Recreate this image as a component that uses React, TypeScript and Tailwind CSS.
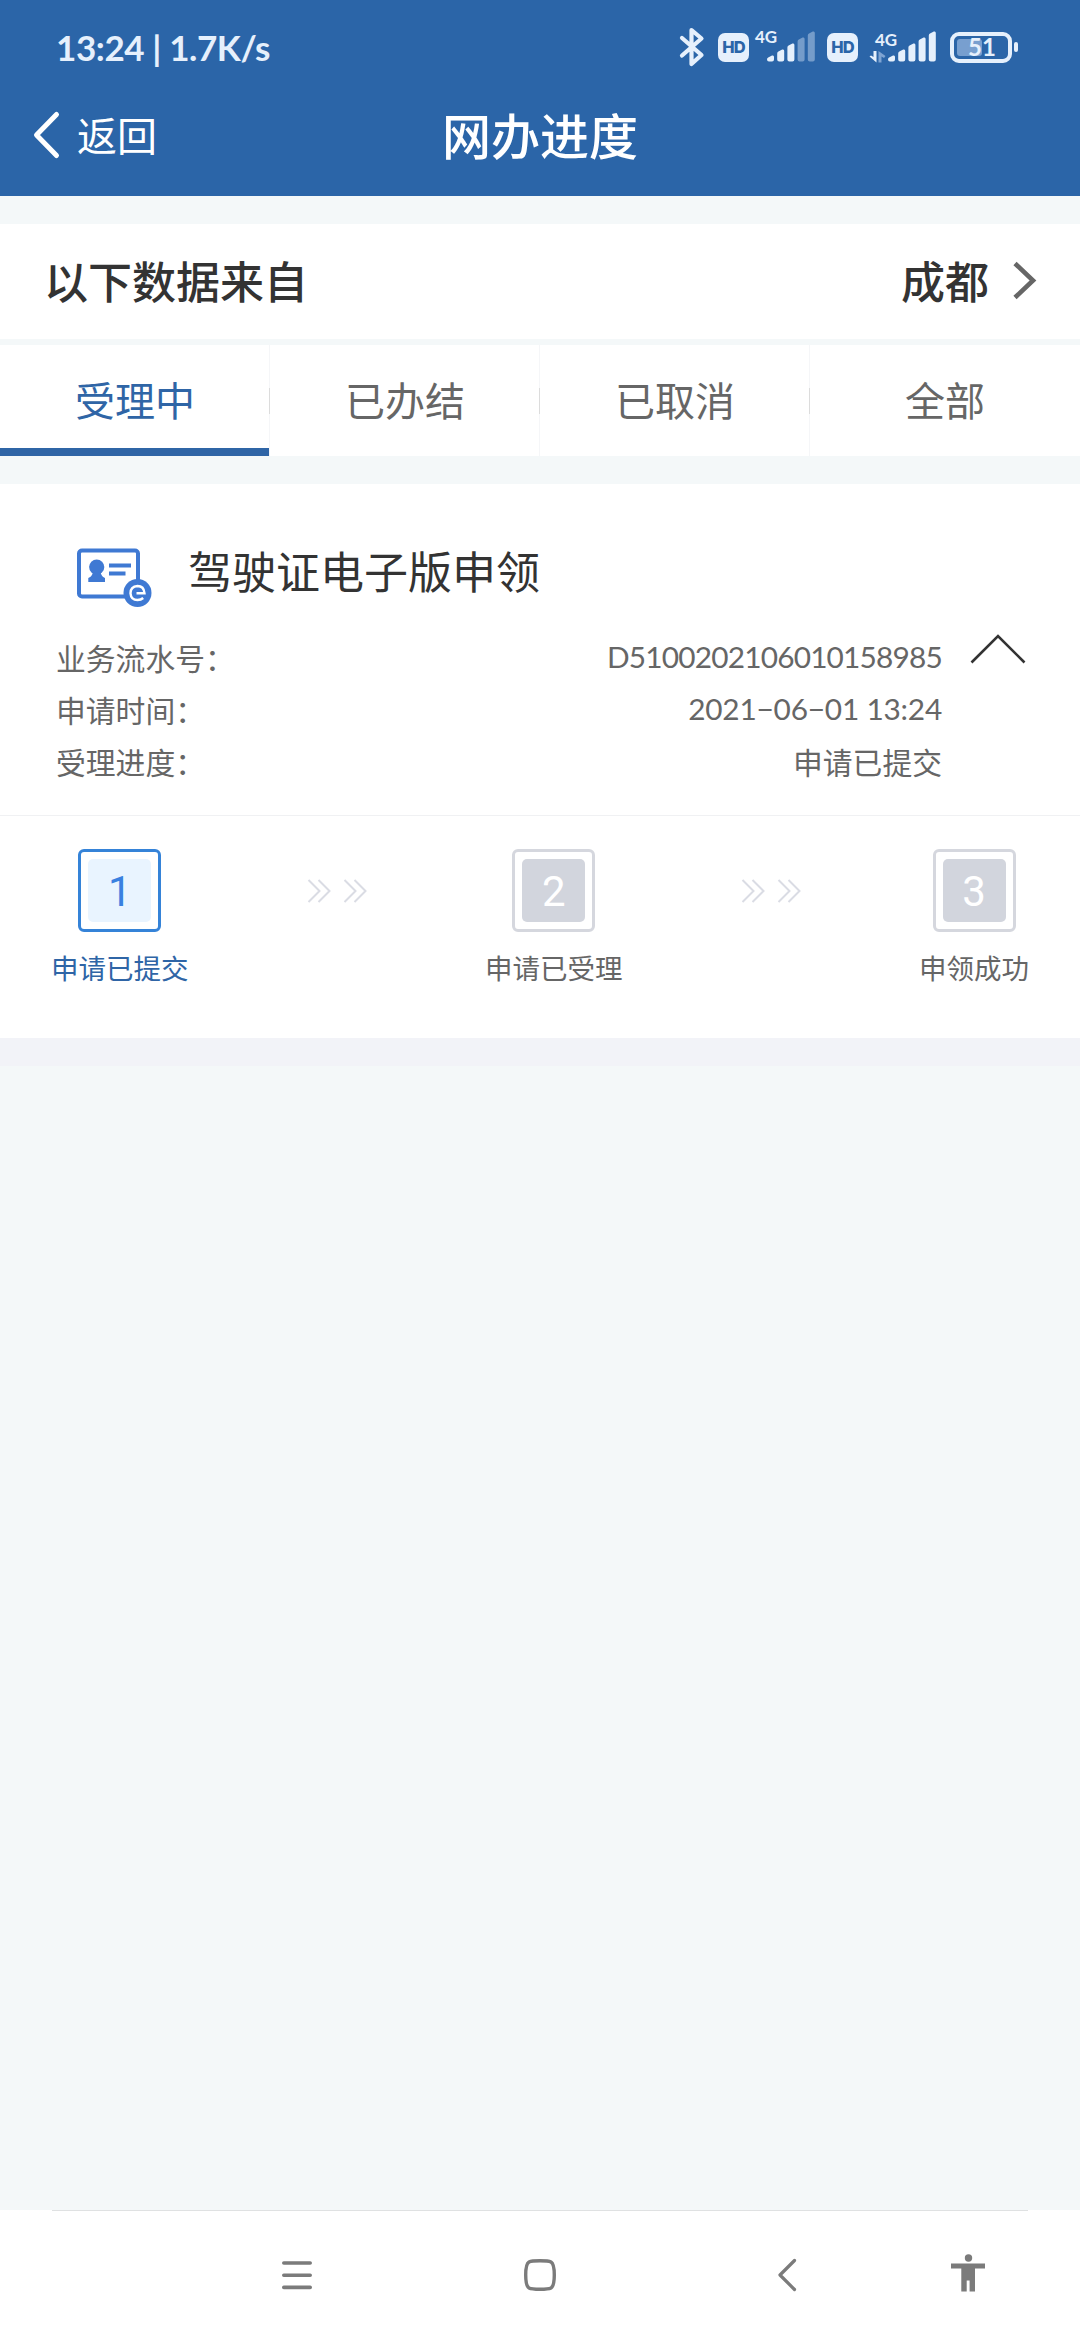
import React from "react";

function BluetoothIcon() {
  return (
    <svg width="26" height="42" viewBox="0 0 26 42" fill="none" stroke="#e6f0fc" strokeWidth="4.2" strokeLinecap="round" strokeLinejoin="round">
      <path d="M3 12 L22.5 29 L12.5 38 V4 L22.5 12.5 L3 29.5" />
    </svg>
  );
}

function HdBadge() {
  return (
    <div className="flex h-[29px] w-[31px] items-center justify-center rounded-[7px] bg-[#e6f0fc] font-['Inter',sans-serif] text-[16.5px] leading-none font-extrabold tracking-[-0.8px] text-[#2b65a8]">
      HD
    </div>
  );
}

function SignalBars({ dimmed }: { dimmed: number }) {
  const tops = [24, 18, 12, 6, 0];
  return (
    <svg width="49" height="32" viewBox="0 0 49 32">
      {tops.map((t, i) => (
        <path
          key={t}
          d={`M${i * 10.2} ${t + 4.5} q0 -1.5 1.2 -2 L${i * 10.2 + 5} ${t + 0.6} q2 -0.8 2 1.4 V28.5 q0 2 -2 2 H${i * 10.2 + 2} q-2 0 -2 -2 Z`}
          fill="#e6f0fc"
          fillOpacity={i >= 5 - dimmed ? 0.4 : 1}
        />
      ))}
    </svg>
  );
}

function Battery() {
  return (
    <div className="flex items-center gap-[2px]">
      <div className="relative flex h-[31px] w-[62px] items-center rounded-[9px] border-4 border-[#e6f0fc] pl-[3px]">
        <div className="h-[17px] w-[25px] rounded-[3px] bg-[#789fcf]" />
        <span className="absolute left-[14px] w-[28px] text-center font-['Lato',sans-serif] text-[24px] leading-none font-bold text-[#e6f0fc]">51</span>
      </div>
      <div className="h-[10px] w-[4px] rounded-[2px] bg-[#e6f0fc]" />
    </div>
  );
}

function StatusBar() {
  return (
    <div className="flex h-[94px] justify-between pr-[62px] pl-[56px]">
      <div className="mt-[25px] font-['Lato',sans-serif] text-[35px] leading-[44px] font-bold tracking-[-0.400px] whitespace-pre text-[#e6f0fc]">13:24 | 1.7K/s</div>
      <div className="mt-[25px] flex h-[44px] items-center">
        <BluetoothIcon />
        <div className="ml-[13px]"><HdBadge /></div>
        <span className="ml-[6px] -mt-[21px] w-[22px] font-['Lato',sans-serif] text-[17px] leading-none font-bold text-[#e6f0fc]">4G</span>
        <div className="-ml-[10px]"><SignalBars dimmed={2} /></div>
        <div className="ml-[11px]"><HdBadge /></div>
        <div className="ml-[11px] flex w-[28px] flex-col">
          <span className="pl-[6px] font-['Lato',sans-serif] text-[17px] leading-[18px] font-bold text-[#e6f0fc]">4G</span>
          <svg width="18" height="14" viewBox="0 0 18 14" className="mt-[1px]">
            <path d="M4.5 1 h3 V12.5 L0.5 6.5 L2 5.5 L4.5 7 Z" fill="#e6f0fc" />
            <path d="M9.5 12.5 V1 L16.5 6 L15 8 L12.5 6.5 V12.5 Z" fill="#7fa4d2" />
          </svg>
        </div>
        <div className="-ml-[9px]"><SignalBars dimmed={0} /></div>
        <div className="ml-[13px]"><Battery /></div>
      </div>
    </div>
  );
}

function TitleBar() {
  return (
    <div className="grid h-[102px] grid-cols-3 text-white">
      <div className="flex h-[82px] items-center pl-[31px]">
        <svg width="31" height="50" viewBox="0 0 31 50" fill="none" stroke="currentColor" strokeWidth="5" strokeLinecap="round" strokeLinejoin="round">
          <path d="M25.5 4.5 L5.5 25 L25.5 45.5" />
        </svg>
        <span className="ml-[15px] -mt-[2px] text-[40px] leading-[50px]">返回</span>
      </div>
      <div className="flex h-[80px] items-center justify-center text-[49px] leading-[60px] font-medium">网办进度</div>
    </div>
  );
}

const tabs = ["受理中", "已办结", "已取消", "全部"];

function Tabs() {
  return (
    <div className="grid h-[111px] grid-cols-4 bg-white">
      {tabs.map((t, i) => (
        <div
          key={t}
          className={
            i === 0
              ? "relative flex justify-center border-b-8 border-[#2f65a6] pt-[25px] text-[40px] leading-[58px] text-[#2f65a6]"
              : "relative flex justify-center pt-[25px] text-[40px] leading-[58px] text-[#666666]"
          }
        >
          {t}
          {i < 3 && (
            <div className="absolute top-0 right-0 flex h-[111px] w-px items-center bg-[#f5f6f8]">
              <div className="h-[26px] w-px bg-[#dcdcdc]" />
            </div>
          )}
        </div>
      ))}
    </div>
  );
}

function LicenseIcon() {
  return (
    <svg width="76" height="60" viewBox="0 0 76 60" fill="none">
      <rect x="2" y="2.5" width="59" height="46" rx="3" stroke="#3f79d3" strokeWidth="4" />
      <circle cx="19.7" cy="19" r="7.6" fill="#3f79d3" />
      <path d="M16 23 h7.5 Q24 28.500 28 30 V34 H11.300 V30 Q15.500 28.500 16 23 Z" fill="#3f79d3" />
      <path d="M32 17.500 H54 M32 25.500 H48.500" stroke="#3f79d3" strokeWidth="3.800" />
      <circle cx="60.500" cy="45" r="14" fill="#3f79d3" />
      <path d="M59.500 45.300 H67.500 Q67 38 60.500 38 Q53.500 38.500 53.500 45.300 Q54 52 60.500 52 Q64 52 66.200 50" stroke="white" strokeWidth="2.400" />
    </svg>
  );
}

const rows = [
  { label: "业务流水号：", value: "D5100202106010158985", cls: "font-['Lato','Noto_Sans_CJK_SC',sans-serif] tracking-[-0.8px]" },
  { label: "申请时间：", value: "2021−06−01 13:24", cls: "font-['Lato','Noto_Sans_CJK_SC',sans-serif] tracking-[-0.2px]" },
  { label: "受理进度：", value: "申请已提交", cls: "" },
];

function Arrows() {
  return (
    <svg width="60" height="26" viewBox="0 0 60 26" className="mt-[29px]" fill="none" stroke="#dadce4" strokeWidth="2">
      <path d="M1.500 2 L12.500 13 L1.500 24 M11.500 2 L22.500 13 L11.500 24 M37.500 2 L48.500 13 L37.500 24 M47.500 2 L58.500 13 L47.500 24" />
    </svg>
  );
}

function Step({ n, label, active }: { n: number; label: string; active?: boolean }) {
  return (
    <div className="flex flex-col items-center">
      <div className={active ? "h-[83px] w-[83px] rounded-[6px] border-[3px] border-[#3583d8] p-[7px]" : "h-[83px] w-[83px] rounded-[6px] border-[3px] border-[#d5d7de] p-[7px]"}>
        <div
          className={
            active
              ? "flex h-[63px] items-center justify-center rounded-[5px] bg-[#e9f4ff] pt-[2px] font-['Roboto',sans-serif] text-[42px] leading-none text-[#3a80e0]"
              : "flex h-[63px] items-center justify-center rounded-[5px] bg-[#d2d5dd] pt-[2px] font-['Roboto',sans-serif] text-[42px] leading-none text-white"
          }
        >
          {n}
        </div>
      </div>
      <div className={active ? "mt-[15px] text-[27.5px] leading-[40px] text-[#2f65a6]" : "mt-[15px] text-[27.5px] leading-[40px] text-[#666666]"}>{label}</div>
    </div>
  );
}

function Card() {
  return (
    <div className="bg-white">
      <div className="h-[331px]">
        <div className="flex h-[148px] items-start pt-[64px] pl-[77px]">
          <LicenseIcon />
          <h2 className="ml-[35px] -mt-[6px] h-[56px] text-[44px] leading-[56px] text-[#333333]">驾驶证电子版申领</h2>
        </div>
        <div className="flex pl-[56px]">
          <div className="-mt-px w-[886px] text-[29.800px] leading-[52px] text-[#666666]">
            {rows.map((r) => (
              <div key={r.label} className="flex h-[52px] justify-between">
                <span>{r.label}</span>
                <span className={r.cls}>{r.value}</span>
              </div>
            ))}
          </div>
          <svg width="58" height="34" viewBox="0 0 58 34" className="ml-[28px] -mt-px" fill="none" stroke="#333333" strokeWidth="2.600">
            <path d="M1.500 31.500 L28 5 L54.500 31.500" />
          </svg>
        </div>
      </div>
      <div className="h-px bg-[#f0f1f3]" />
      <div className="flex h-[222px] items-start justify-between px-[51px] pt-[33px]">
        <Step n={1} label="申请已提交" active />
        <Arrows />
        <Step n={2} label="申请已受理" />
        <Arrows />
        <Step n={3} label="申领成功" />
      </div>
    </div>
  );
}

function NavBar() {
  return (
    <div className="h-[130px] bg-white">
      <div className="mx-[52px] h-px bg-[#dfe1e2]" />
      <div className="flex h-[127px] items-center pl-[282px] text-[#7b7b7b]">
        <svg width="30" height="30" viewBox="0 0 30 30" stroke="currentColor" strokeWidth="3.600" strokeLinecap="round">
          <path d="M1.800 3 H28.200 M1.800 15.200 H28.200 M1.800 27.400 H28.200" />
        </svg>
        <svg width="32" height="34" viewBox="0 0 32 34" className="ml-[212px]" fill="none" stroke="currentColor" strokeWidth="3.400">
          <path d="M16 2.700 Q24.500 2.700 27 4 Q30.300 6 30.300 17 Q30.300 28 27 30 Q24.500 31.300 16 31.300 Q7.500 31.300 5 30 Q1.700 28 1.700 17 Q1.700 6 5 4 Q7.500 2.700 16 2.700 Z" />
        </svg>
        <svg width="20" height="34" viewBox="0 0 20 34" className="ml-[221px]" fill="none" stroke="currentColor" strokeWidth="3.200" strokeLinecap="round" strokeLinejoin="round">
          <path d="M17.500 2.500 L3 17 L17.500 31.500" />
        </svg>
        <svg width="34" height="38" viewBox="0 0 34 38" className="ml-[154px] -mt-[4px]" fill="currentColor">
          <circle cx="17.500" cy="4" r="3.700" />
          <path d="M0 9.500 H34 V14.500 H24 V37.500 H18.600 V26.500 H15.700 V37.500 H10.300 V14.500 H0 Z" />
        </svg>
      </div>
    </div>
  );
}

export default function App() {
  return (
    <div className="flex h-[2340px] w-[1080px] flex-col overflow-hidden bg-[#f4f8f9] font-['Noto_Sans_CJK_SC',sans-serif]" lang="zh-CN">
      <header className="bg-[#2b65a8]">
        <StatusBar />
        <TitleBar />
      </header>
      <div className="mt-[28px] flex h-[115px] items-center justify-between bg-white pr-[42px] pl-[44px] text-[44px] leading-[64px] font-medium text-[#333333]">
        <span className="-mt-[4px]">以下数据来自</span>
        <div className="flex items-center">
          <span className="-mt-[3px]">成都</span>
          <svg width="26" height="42" viewBox="0 0 26 42" className="-mt-px ml-[23px]" fill="none" stroke="#666666" strokeWidth="4.600">
            <path d="M3 3.500 L21 20.500 L3 37.500" />
          </svg>
        </div>
      </div>
      <div className="mt-[6px]">
        <Tabs />
      </div>
      <div className="mt-[28px]">
        <Card />
      </div>
      <div className="h-[28px] bg-[#f2f3f8]" />
      <div className="flex-1" />
      <NavBar />
    </div>
  );
}
